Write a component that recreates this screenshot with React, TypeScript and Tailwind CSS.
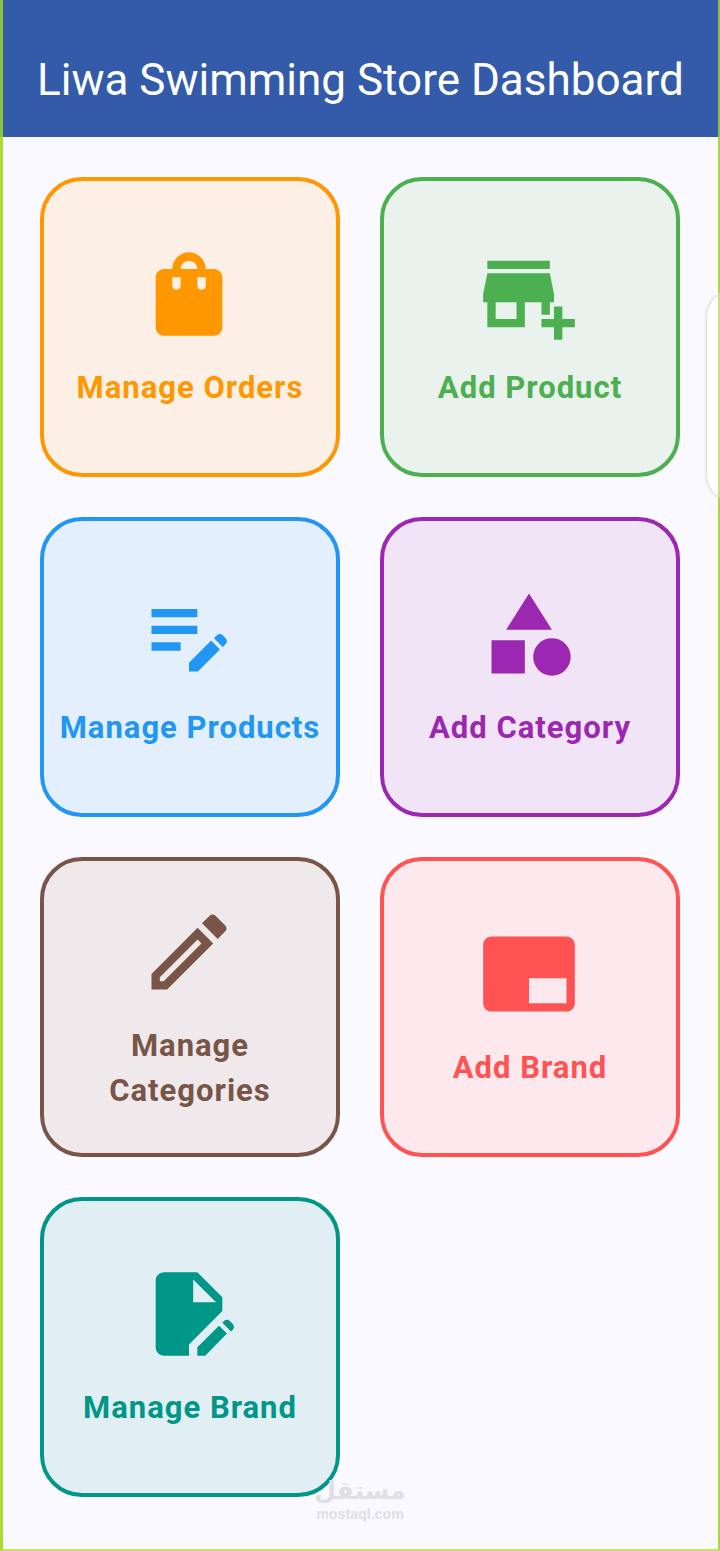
import React from 'react';

const BagIcon = () => (
  <path d="M18 6h-2c0-2.21-1.79-4-4-4S8 3.79 8 6H6c-1.1 0-2 .9-2 2v12c0 1.1.9 2 2 2h12c1.1 0 2-.9 2-2V8c0-1.1-.9-2-2-2zm-8 4c0 .55-.45 1-1 1s-1-.45-1-1V8h2v2zm2-6c1.1 0 2 .9 2 2h-4c0-1.1.9-2 2-2zm4 6c0 .55-.45 1-1 1s-1-.45-1-1V8h2v2z" />
);

const StoreIcon = () => (
  <path d="M15 17h2v-3h1v-2l-1-5H2l-1 5v2h1v6h9v-6h4v3zm-6 1H4v-4h5v4zM2 4h15v2H2zM20 18v-3h-2v3h-3v2h3v3h2v-3h3v-2z" />
);

const EditNoteIcon = () => (
  <path d="M3 6h11v2H3zM3 10h11v2H3zM3 14h7v2H3zM12 21v-2.12l5.3-5.3 2.12 2.12L14.12 21zM18 13l.7-.7c.4-.4 1-.4 1.4 0l.7.7c.4.4.4 1 0 1.4l-.7.7z" />
);

const CategoryIcon = () => (
  <path d="M12 2.3l-5.5 8.7h11zM17.5 13a4.5 4.5 0 1 0 0 9 4.5 4.5 0 1 0 0-9zM3 13.5h8v8H3z" />
);

const PencilIcon = () => (
  <path d="M14.06 9.02l.92.92L5.92 19H5v-.92l9.06-9.06M17.66 3c-.25 0-.51.1-.7.29l-1.83 1.83 3.75 3.75 1.83-1.83c.39-.39.39-1.02 0-1.41l-2.34-2.34c-.2-.2-.45-.29-.71-.29zm-3.6 3.19L3 17.25V21h3.75L17.81 9.94l-3.75-3.75z" />
);

const WatermarkIcon = () => (
  <path d="M21 3H3c-1.1 0-2 .9-2 2v14c0 1.1.9 2 2 2h18c1.1 0 2-.9 2-2V5c0-1.1-.9-2-2-2zm0 16h-9v-6h9v6z" />
);

const EditDocIcon = () => (
  <path
    fillRule="evenodd"
    d="M6 2c-1.1 0-2 .9-2 2v16c0 1.1.9 2 2 2h6v-2.7l8-8V8l-6-6H6zM13 3.7l5.5 5.5H13zM14 22v-2l5.2-5.2 1.9 1.9L15.9 22zM20 14.1l.4-.4c.4-.4 1-.4 1.4 0l.7.7c.4.4.4 1 0 1.4l-.4.4z"
  />
);

const items = [
  { label: 'Manage Orders', icon: <BagIcon />, card: 'border-[#ff9800] bg-[#fcefe6] text-[#ff9800]' },
  { label: 'Add Product', icon: <StoreIcon />, card: 'border-[#4caf50] bg-[#e9f2ec] text-[#4caf50]' },
  { label: 'Manage Products', icon: <EditNoteIcon />, card: 'border-[#2196f3] bg-[#e4effe] text-[#2196f3]' },
  { label: 'Add Category', icon: <CategoryIcon />, card: 'border-[#9c27b0] bg-[#f1e4f7] text-[#9c27b0]' },
  { label: 'Manage Categories', icon: <PencilIcon />, card: 'border-[#795548] bg-[#efe9ec] text-[#795548]' },
  { label: 'Add Brand', icon: <WatermarkIcon />, card: 'border-[#ff5252] bg-[#fde8ee] text-[#ff5252]' },
  { label: 'Manage Brand', icon: <EditDocIcon />, card: 'border-[#009688] bg-[#e1eef3] text-[#009688]' },
];

const App: React.FC = () => {
  return (
    <div className="relative flex h-[1551px] w-[720px] flex-col overflow-hidden bg-[#faf9ff] font-['Roboto',sans-serif]">
      <header className="flex h-[137px] shrink-0 items-end border-l-[3px] border-r-2 border-[#8bc63a] bg-[#345ba9] pb-[27px] pl-[34px]">
        <h1 className="text-[44px] leading-[60px] text-white">Liwa Swimming Store Dashboard</h1>
      </header>

      <main className="grid flex-1 grid-cols-[300px_300px] content-start gap-[40px] border-b-2 border-l-[3px] border-r-2 border-[#aadb32] border-b-[#c4e362] pl-[37px] pt-[40px]">
        {items.map((item) => (
          <div
            key={item.label}
            className={`flex h-[300px] w-[300px] flex-col items-center justify-center rounded-[42px] border-4 px-[10px] ${item.card}`}
          >
            <svg viewBox="0 0 24 24" fill="currentColor" className="mr-[2px] h-[100px] w-[100px]">
              {item.icon}
            </svg>
            <span className="mt-[21px] text-center text-[31px] font-bold leading-[45px] tracking-[1px]">
              {item.label}
            </span>
          </div>
        ))}
      </main>

      {/* side panel handle, runs off the right edge */}
      <div className="absolute right-[-20px] top-[291px] h-[210px] w-[33px] rounded-l-[26px] bg-white shadow-[-1px_0_3px_rgba(0,0,0,0.15)]" />
      <div className="absolute right-0 top-[293px] h-[205px] w-[2px] bg-[#c5e17a]" />

      {/* watermark */}
      <div className="absolute left-[316px] top-[1475px] flex w-[88px] flex-col items-center text-[#e0dfe4]">
        <span className="font-['DejaVu_Sans',sans-serif] text-[25px] font-bold leading-[32px]">مستقل</span>
        <span className="font-['Liberation_Sans',sans-serif] text-[14.2px] font-bold leading-[14px]">mostaql.com</span>
      </div>
    </div>
  );
};

export default App;
